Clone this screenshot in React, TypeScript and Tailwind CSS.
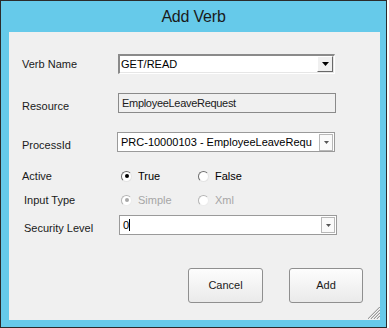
import React from "react";

function Arrow({ color = "#000", w = 7, h = 4 }: { color?: string; w?: number; h?: number }) {
  return (
    <svg width={w} height={h} viewBox={`0 0 ${w} ${h}`}>
      <polygon points={`0,0 ${w},0 ${w / 2},${h}`} fill={color} />
    </svg>
  );
}

function Radio({ checked, disabled, label }: { checked?: boolean; disabled?: boolean; label: string }) {
  return (
    <div className="flex items-center w-[77px]">
      <div
        className={
          "w-[11px] h-[11px] rounded-full border flex items-center justify-center bg-white " +
          (disabled
            ? "border-t-[#b4b4b4] border-l-[#b4b4b4] border-b-[#ececec] border-r-[#ececec] bg-[#f4f4f4]"
            : "border-t-[#6e6e6e] border-l-[#6e6e6e] border-b-[#e4e4e4] border-r-[#e4e4e4]")
        }
      >
        {checked && (
          <div className={"w-[4px] h-[4px] rounded-full " + (disabled ? "bg-[#a8a8a8]" : "bg-black")} />
        )}
      </div>
      <span className={"ml-[6px] " + (disabled ? "text-[#a6a6a6]" : "text-black")}>{label}</span>
    </div>
  );
}

export default function App() {
  return (
    <div className="w-[389px] h-[328px] bg-white font-['Liberation_Sans',Arial,sans-serif] text-[11px] leading-[13px] text-black">
      <div className="w-[387px] h-[328px] border border-[#2b2b2b] bg-[#66caea] flex flex-col">
        <div className="h-[31px] flex items-center justify-center text-[16px] leading-[18px] text-[#1a1a1a] tracking-[-0.2px]">
          Add Verb
        </div>
        <div className="relative flex-1 ml-[8px] mr-[6px] mb-[7px] bg-[#f0f0f0] flex flex-col">
          {/* Verb Name */}
          <div className="mt-[22px] h-[20px] flex items-start">
            <div className="w-[109px] pl-[13px] pt-[4px] text-[#1a1a1a]">Verb Name</div>
            <div className="w-[217px] h-[20px] border-t-2 border-l-2 border-t-[#8a8a8a] border-l-[#8a8a8a] border-b border-r border-b-white border-r-white">
              <div className="h-full bg-white border-b border-r border-b-[#e6e6e6] border-r-[#e6e6e6] flex items-center">
                <span className="flex-1 pl-[1px] pt-[1px]">GET/READ</span>
                <div className="w-[16px] h-[16px] bg-[#f0f0f0] border-t border-l border-t-white border-l-white border-b border-r border-b-[#696969] border-r-[#696969] flex items-center justify-center">
                  <Arrow />
                </div>
              </div>
            </div>
          </div>

          {/* Resource */}
          <div className="mt-[19px] h-[20px] flex items-start">
            <div className="w-[109px] pl-[13px] pt-[7px] text-[#1a1a1a]">Resource</div>
            <div className="w-[218px] h-[20px] border border-[#8a8a8a] bg-[#f0f0f0] flex items-center pl-[3px] tracking-[-0.3px] text-[#1a1a1a]">
              EmployeeLeaveRequest
            </div>
          </div>

          {/* ProcessId */}
          <div className="mt-[19px] h-[20px] flex items-start">
            <div className="w-[108px] pl-[13px] pt-[7px] text-[#1a1a1a]">ProcessId</div>
            <div className="w-[218px] h-[20px] border border-[#9a9a9a] bg-white flex items-center pr-[1px]">
              <span className="flex-1 pl-[3px] whitespace-nowrap overflow-hidden">PRC-10000103 - EmployeeLeaveRequ</span>
              <div className="w-[14px] h-[17px] border border-[#b8b8b8] bg-[#fafafa] flex items-center justify-center">
                <Arrow color="#555" w={5} h={3} />
              </div>
            </div>
          </div>

          {/* Active */}
          <div className="mt-[16px] h-[16px] flex items-center">
            <div className="w-[112px] pl-[13px] text-[#1a1a1a]">Active</div>
            <Radio checked label="True" />
            <Radio label="False" />
          </div>

          {/* Input Type */}
          <div className="mt-[8px] h-[16px] flex items-center">
            <div className="w-[112px] pl-[15px] text-[#1a1a1a]">Input Type</div>
            <Radio checked disabled label="Simple" />
            <Radio disabled label="Xml" />
          </div>

          {/* Security Level */}
          <div className="mt-[7px] h-[20px] flex items-start">
            <div className="w-[110px] pl-[15px] pt-[7px] text-[#1a1a1a]">Security Level</div>
            <div className="w-[218px] h-[20px] border border-[#9a9a9a] bg-white flex items-center pr-[1px]">
              <span className="flex-1 pl-[3px] flex items-center">
                <span>0</span>
                <span className="inline-block w-[1px] h-[12px] bg-black" />
              </span>
              <div className="w-[14px] h-[16px] border border-[#b8b8b8] bg-[#fafafa] flex items-center justify-center">
                <Arrow color="#555" w={5} h={3} />
              </div>
            </div>
          </div>

          {/* Buttons */}
          <div className="mt-[33px] flex pl-[179px] gap-[26px]">
            <button className="w-[75px] h-[35px] rounded-[3px] border border-[#8f8f8f] bg-gradient-to-b from-[#fdfdfd] to-[#eaeaea] text-[11px] text-[#1a1a1a]">
              Cancel
            </button>
            <button className="w-[74px] h-[35px] rounded-[3px] border border-[#8f8f8f] bg-gradient-to-b from-[#fdfdfd] to-[#eaeaea] text-[11px] text-[#1a1a1a]">
              Add
            </button>
          </div>

          {/* size grip */}
          <svg className="absolute right-0 bottom-[1px]" width="12" height="12" viewBox="0 0 12 12">
            {[3, 6, 9, 12].map((k) => (
              <g key={k}>
                <line x1={12 - k} y1={12} x2={12} y2={12 - k} stroke="#9a9a9a" strokeWidth="1.2" />
                <line x1={13 - k} y1={12} x2={12} y2={13 - k} stroke="#ffffff" strokeWidth="0.8" />
              </g>
            ))}
          </svg>
        </div>
      </div>
    </div>
  );
}
